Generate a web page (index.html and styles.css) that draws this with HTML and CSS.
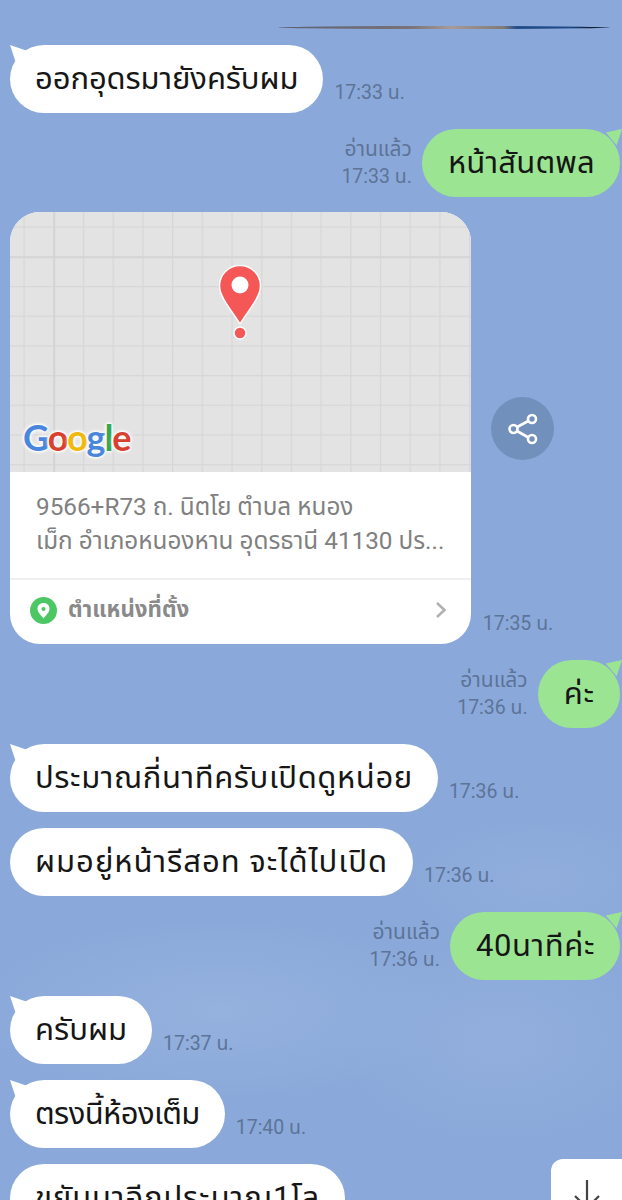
FILE: index.html
```html
<!DOCTYPE html>
<html lang="th">
<head>
<meta charset="utf-8">
<title>แชท</title>
<link rel="stylesheet" href="styles.css">
</head>
<body>
<main class="chat">
  <div class="strip"></div>

  <div class="row">
    <div class="bubble in ls-t"><svg class="tail" viewBox="0 0 20 20"><path d="M0 0 L18 6 L6 18 Z"/></svg>ออกอุดรมายังครับผม</div>
    <div class="meta"><span>17:33 น.</span></div>
  </div>

  <div class="row out">
    <div class="meta"><span class="read">อ่านแล้ว</span><span>17:33 น.</span></div>
    <div class="bubble mine"><svg class="tail" viewBox="0 0 20 20"><path d="M20 0 L2 4 L14 18 Z"/></svg>หน้าสันตพล</div>
  </div>

  <div class="row card-row">
    <article class="card">
      <div class="map">
        <svg class="pin" viewBox="0 0 44 76"><path d="M22 1.5C10.5 1.5 1.5 10.5 1.5 22C1.5 33 14 47 21 58.5Q22 60 23 58.5C30 47 42.5 33 42.500 22C42.500 10.500 33.500 1.500 22 1.500Z" fill="#f55757" stroke="#fff" stroke-width="1.500"/><circle cx="22" cy="21" r="8.500" fill="#fff"/><circle cx="22" cy="69" r="6" fill="#f55757" stroke="#fff" stroke-width="1.500"/></svg>
        <div class="google"><span class="g-b">G</span><span class="g-r">o</span><span class="g-y">o</span><span class="g-b">g</span><span class="g-g">l</span><span class="g-r">e</span></div>
      </div>
      <div class="address">9566+R73 ถ. นิตโย ตำบล หนอง<br>เม็ก อำเภอหนองหาน อุดรธานี 41130 ปร...</div>
      <div class="place">
        <svg class="place-icon" viewBox="0 0 27 27"><circle cx="13.500" cy="13.500" r="13.500" fill="#4cc764"/><path d="M13.500 6C9.800 6 7.500 8.700 7.500 11.800C7.500 15.500 11.300 18.500 13.500 21.500C15.700 18.500 19.500 15.500 19.500 11.800C19.500 8.700 17.200 6 13.500 6Z" fill="#fff"/><circle cx="13.500" cy="12" r="2" fill="#4cc764"/></svg>
        <span class="place-label">ตำแหน่งที่ตั้ง</span>
        <svg class="chev" viewBox="0 0 12 18"><path d="M2 2L9.500 9L2 16" fill="none" stroke="#b0b0b0" stroke-width="2.500"/></svg>
      </div>
    </article>
    <div class="side">
      <button class="share" aria-label="แชร์"><svg viewBox="0 0 32 32" width="32" height="32"><g fill="none" stroke="#fff" stroke-width="2.600"><path d="M6.500 16L24 6.500M6.500 16L24 26"/><circle cx="6.500" cy="16" r="4" fill="#7190bb"/><circle cx="25" cy="6" r="4" fill="#7190bb"/><circle cx="25" cy="26" r="4" fill="#7190bb"/></g></svg></button>
      <div class="meta"><span>17:35 น.</span></div>
    </div>
  </div>

  <div class="row out">
    <div class="meta"><span class="read">อ่านแล้ว</span><span>17:36 น.</span></div>
    <div class="bubble mine ls-b"><svg class="tail" viewBox="0 0 20 20"><path d="M20 0 L2 4 L14 18 Z"/></svg>ค่ะ</div>
  </div>

  <div class="row">
    <div class="bubble in ls-a"><svg class="tail" viewBox="0 0 20 20"><path d="M0 0 L18 6 L6 18 Z"/></svg>ประมาณกี่นาทีครับเปิดดูหน่อย</div>
    <div class="meta"><span>17:36 น.</span></div>
  </div>

  <div class="row">
    <div class="bubble in ls-c">ผมอยู่หน้ารีสอท จะได้ไปเปิด</div>
    <div class="meta"><span>17:36 น.</span></div>
  </div>

  <div class="row out">
    <div class="meta"><span class="read">อ่านแล้ว</span><span>17:36 น.</span></div>
    <div class="bubble mine ls-a"><svg class="tail" viewBox="0 0 20 20"><path d="M20 0 L2 4 L14 18 Z"/></svg>40นาทีค่ะ</div>
  </div>

  <div class="row">
    <div class="bubble in"><svg class="tail" viewBox="0 0 20 20"><path d="M0 0 L18 6 L6 18 Z"/></svg>ครับผม</div>
    <div class="meta"><span>17:37 น.</span></div>
  </div>

  <div class="row">
    <div class="bubble in ls-n"><svg class="tail" viewBox="0 0 20 20"><path d="M0 0 L18 6 L6 18 Z"/></svg>ตรงนี้ห้องเต็ม</div>
    <div class="meta"><span>17:40 น.</span></div>
  </div>

  <div class="row">
    <div class="bubble in ls-b">ขยับมาอีกประมาณ1โล</div>
  </div>

  <button class="down" aria-label="เลื่อนลง"><svg viewBox="0 0 40 44" width="40" height="44"><path d="M20 0V28M8 16L20 28L32 16" fill="none" stroke="#444" stroke-width="2.200"/></svg></button>
</main>
</body>
</html>
```
FILE: styles.css
```css
* { box-sizing: border-box; }
html, body { margin: 0; padding: 0; }
body {
  width: 622px;
  height: 1200px;
  overflow: hidden;
  font-family: Roboto, "Noto Sans", "Noto Sans Thai", sans-serif;
}
.chat {
  position: relative;
  height: 1200px;
  overflow: hidden;
  padding-top: 26px;
  display: flex;
  flex-direction: column;
  gap: 16px;
  background:
    radial-gradient(ellipse 130px 60px at 540px 880px, rgba(155,180,222,.4), transparent),
    radial-gradient(ellipse 240px 90px at 220px 1010px, rgba(160,185,225,.5), transparent),
    radial-gradient(ellipse 160px 100px at 500px 1040px, rgba(155,180,222,.5), transparent),
    #8aa9da;
}
.strip {
  flex: none;
  height: 3px;
  margin: 0 12px 0 278px;
  border-radius: 50%;
  background: linear-gradient(90deg, #5a6070 0, #7a7378 40%, #a89a98 52%, #807a76 68%, #1f4a86 72%, #1f4a86 88%, #0d1c33 94%, #2a3c5a 100%);
}
.row {
  display: flex;
  align-items: flex-end;
  gap: 11px;
  padding-left: 10px;
  flex: none;
}
.row.out { justify-content: flex-end; gap: 10px; padding: 0 2px 0 0; }
.card-row { margin-top: -1px; }
.bubble {
  position: relative;
  height: 68px;
  padding: 0 25px;
  border-radius: 34px;
  display: flex;
  align-items: center;
  font-size: 31px;
  color: #161616;
  white-space: nowrap;
}
.in { background: #fff; }
.mine { background: #9be592; padding-left: 26px; letter-spacing: .2px; }
.ls-n { letter-spacing: -.6px; }
.ls-t { letter-spacing: -.1px; }
.ls-a { letter-spacing: .6px; }
.ls-b { letter-spacing: .9px; }
.ls-c { letter-spacing: 1px; }
.tail { position: absolute; width: 18px; height: 18px; top: 0; }
.in .tail { left: 0; fill: #fff; }
.mine .tail { right: -2px; fill: #9be592; }
.meta {
  display: flex;
  flex-direction: column;
  gap: 6px;
  padding-bottom: 9px;
  font-size: 19.500px;
  line-height: 22px;
  letter-spacing: 0;
  color: #5d7398;
  text-align: right;
  white-space: nowrap;
}
.read { font-size: 21px; }
.card {
  width: 461px;
  height: 432px;
  border-radius: 30px;
  overflow: hidden;
  background: #fff;
  flex: none;
}
.map {
  position: relative;
  height: 260px;
  background-color: #e3e3e3;
  background-image:
    linear-gradient(90deg, transparent 43px, #d2d2d2 44px, transparent 46px),
    linear-gradient(180deg, transparent 44px, #d4d4d4 45px, transparent 47px),
    repeating-linear-gradient(90deg, transparent 0 13px, #d7d7d7 14px, transparent 15.500px, transparent 29.700px),
    repeating-linear-gradient(180deg, transparent 0 14px, #d7d7d7 15px, transparent 16.500px, transparent 29.700px);
}
.pin { position: absolute; left: 208px; top: 52px; width: 44px; height: 76px; }
.google {
  position: absolute;
  left: 13px;
  top: 202px;
  font-family: Lato, sans-serif;
  font-size: 36px;
  line-height: 46px;
  font-weight: 700;
  letter-spacing: -1.200px;
  text-shadow: 0 0 2px #fff, 0 0 3px #fff, 0 0 4px #fff, 0 0 4px #fff;
}
.g-b { color: #4a86dc; }
.g-r { color: #d8402f; }
.g-y { color: #f0b90b; }
.g-g { color: #38a751; }
.address {
  height: 108px;
  padding: 18px 20px 0 26px;
  font-size: 24.300px;
  line-height: 34px;
  color: #808080;
  white-space: nowrap;
  border-bottom: 2px solid #f0f0f0;
}
.place {
  display: flex;
  align-items: center;
  gap: 11px;
  height: 62px;
  padding: 0 24px 2px 20px;
}
.place-icon { width: 27px; height: 27px; flex: none; }
.place-label { flex: 1; font-size: 22.300px; font-weight: 700; color: #8a8a8a; }
.chev { width: 12px; height: 18px; flex: none; }
.side {
  display: flex;
  flex-direction: column;
  align-items: center;
  align-self: stretch;
  justify-content: space-between;
  padding-top: 185px;
}
.share {
  width: 63px;
  height: 63px;
  padding: 0;
  border: 0;
  border-radius: 50%;
  background: #7190bb;
  display: flex;
  align-items: center;
  justify-content: center;
  margin-left: 9px;
}
.down {
  position: absolute;
  left: 551px;
  top: 1159px;
  width: 71px;
  height: 60px;
  padding: 21px 0 0;
  border: 0;
  border-radius: 12px 0 0 0;
  background: #fff;
}
```
